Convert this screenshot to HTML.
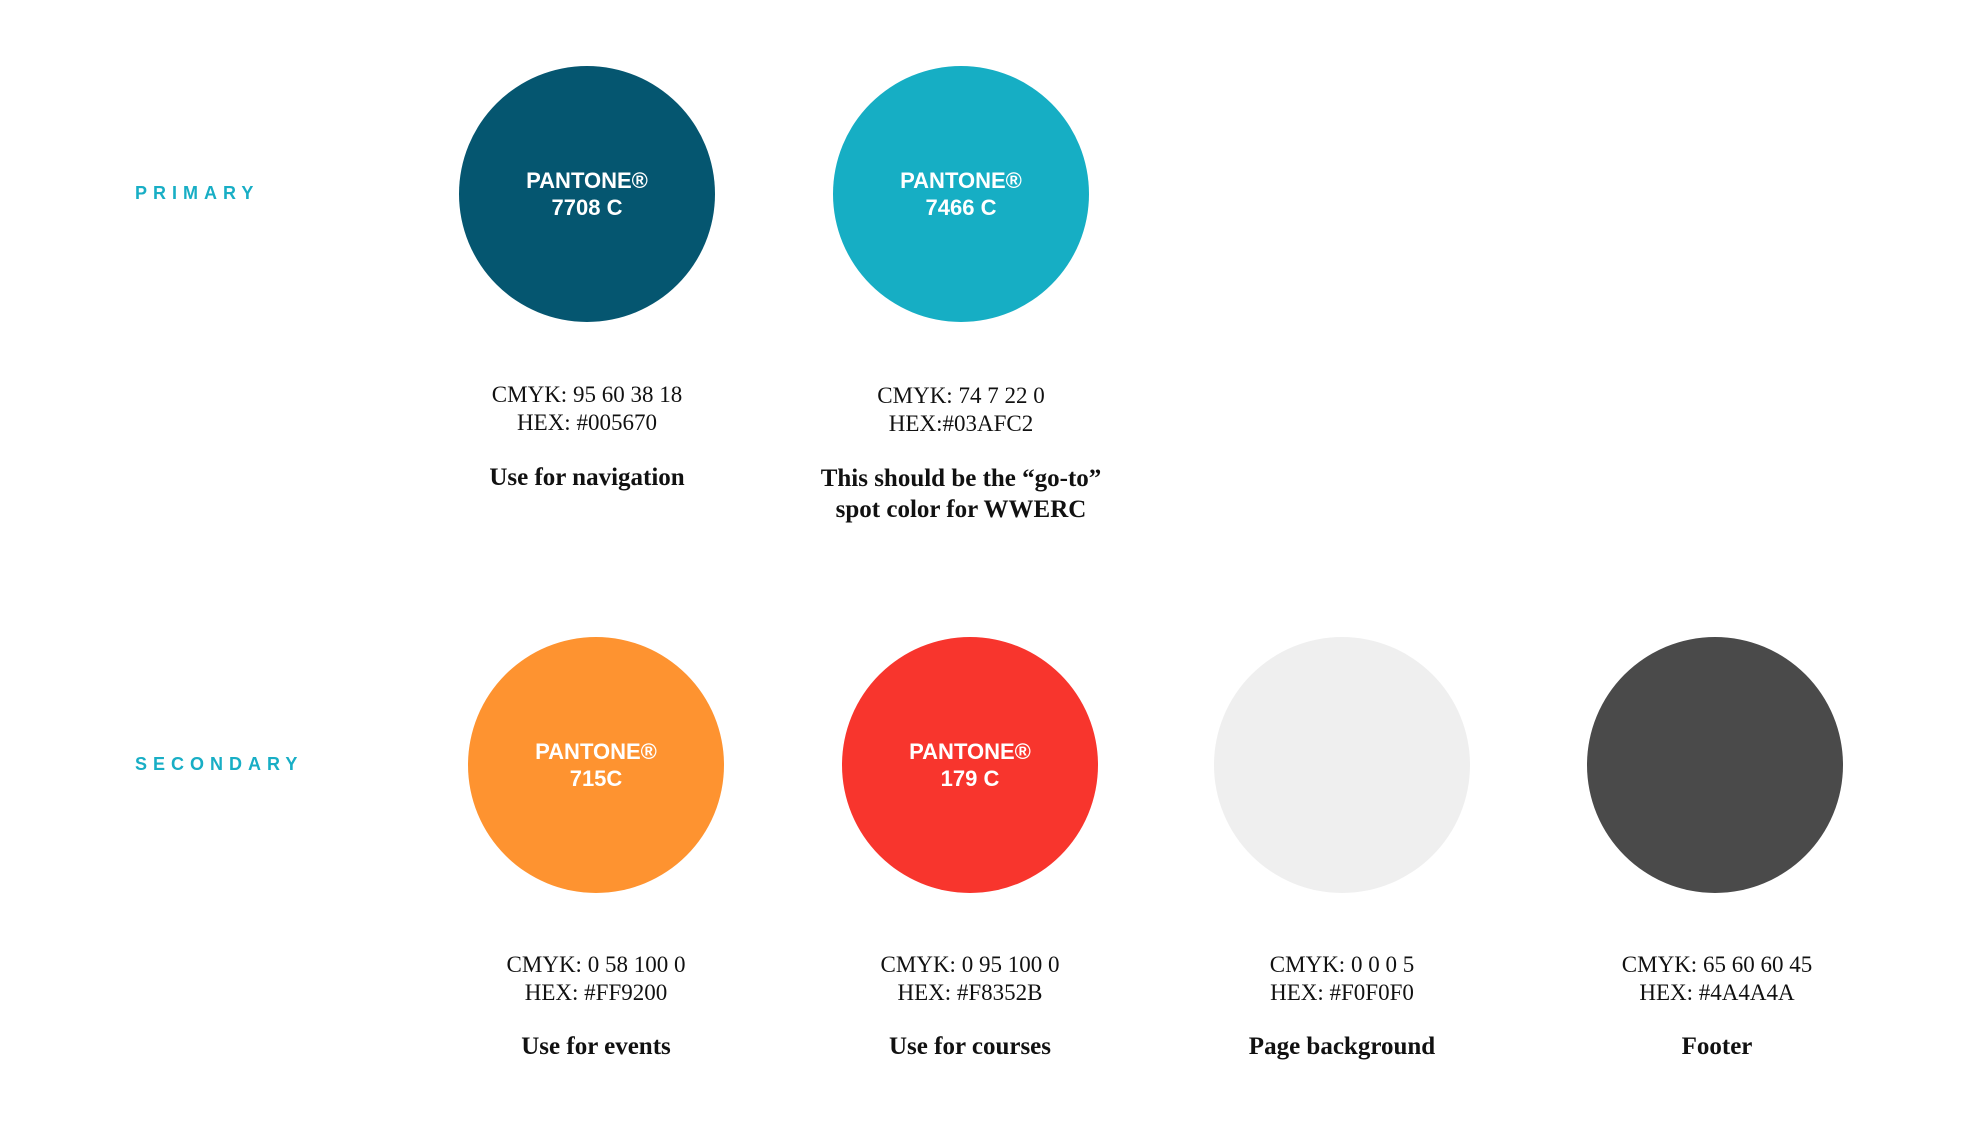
<!DOCTYPE html>
<html><head><meta charset="utf-8"><style>
html,body{margin:0;padding:0;background:#fff;width:1972px;height:1148px;overflow:hidden;position:relative}
.c{position:absolute;width:256px;height:256px;border-radius:50%;display:flex;flex-direction:column;align-items:center;justify-content:center;text-align:center;color:#fff;font-family:"Liberation Sans",sans-serif;font-weight:bold;font-size:22px;line-height:27px}
.lab{position:absolute;font-family:"Liberation Sans",sans-serif;font-weight:bold;font-size:18px;letter-spacing:6px;color:#18aec5}
.t{position:absolute;width:400px;text-align:center;font-family:"Liberation Serif",serif;font-size:23px;line-height:28px;color:#111}
.b{font-weight:bold;line-height:31px;font-size:25px}
</style></head><body>
<div class="lab" style="left:135px;top:183px">PRIMARY</div>
<div class="lab" style="left:135px;top:754px">SECONDARY</div>

<div class="c" style="left:459px;top:66px;background:#055670">PANTONE®<br>7708 C</div>
<div class="c" style="left:833px;top:66px;background:#16aec4">PANTONE®<br>7466 C</div>

<div class="c" style="left:468px;top:637px;background:#fe9330">PANTONE®<br>715C</div>
<div class="c" style="left:842px;top:637px;background:#f8352d">PANTONE®<br>179 C</div>
<div class="c" style="left:1214px;top:637px;background:#efefef"></div>
<div class="c" style="left:1587px;top:637px;background:#4a4a4a"></div>

<div class="t" style="left:387px;top:381px">CMYK: 95 60 38 18<br>HEX: #005670</div>
<div class="t b" style="left:387px;top:462px">Use for navigation</div>
<div class="t" style="left:761px;top:382px">CMYK: 74 7 22 0<br>HEX:#03AFC2</div>
<div class="t b" style="left:761px;top:463px">This should be the “go-to”<br>spot color for WWERC</div>

<div class="t" style="left:396px;top:951px">CMYK: 0 58 100 0<br>HEX: #FF9200</div>
<div class="t b" style="left:396px;top:1031px">Use for events</div>
<div class="t" style="left:770px;top:951px">CMYK: 0 95 100 0<br>HEX: #F8352B</div>
<div class="t b" style="left:770px;top:1031px">Use for courses</div>
<div class="t" style="left:1142px;top:951px">CMYK: 0 0 0 5<br>HEX: #F0F0F0</div>
<div class="t b" style="left:1142px;top:1031px">Page background</div>
<div class="t" style="left:1517px;top:951px">CMYK: 65 60 60 45<br>HEX: #4A4A4A</div>
<div class="t b" style="left:1517px;top:1031px">Footer</div>
</body></html>
